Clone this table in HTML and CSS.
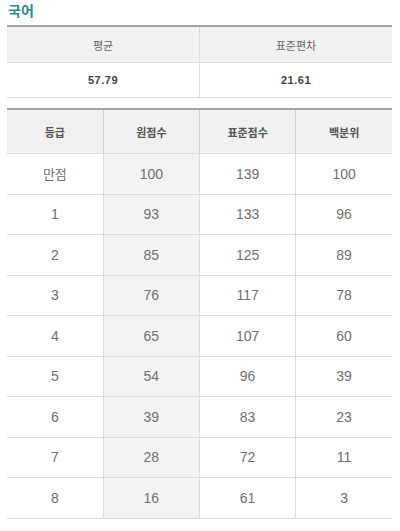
FILE: index.html
```html
<!DOCTYPE html>
<html lang="ko">
<head>
<meta charset="utf-8">
<link rel="stylesheet" href="styles.css">
</head>
<body>
<div class="page">
  <h2 class="title">국어</h2>
  <table class="summary">
    <thead>
      <tr><th>평균</th><th>표준편차</th></tr>
    </thead>
    <tbody>
      <tr><td>57.79</td><td>21.61</td></tr>
    </tbody>
  </table>
  <table class="grades">
    <thead>
      <tr><th>등급</th><th>원점수</th><th>표준점수</th><th>백분위</th></tr>
    </thead>
    <tbody>
      <tr><td class="ko">만점</td><td class="raw">100</td><td>139</td><td>100</td></tr>
      <tr><td>1</td><td class="raw">93</td><td>133</td><td>96</td></tr>
      <tr><td>2</td><td class="raw">85</td><td>125</td><td>89</td></tr>
      <tr><td>3</td><td class="raw">76</td><td>117</td><td>78</td></tr>
      <tr><td>4</td><td class="raw">65</td><td>107</td><td>60</td></tr>
      <tr><td>5</td><td class="raw">54</td><td>96</td><td>39</td></tr>
      <tr><td>6</td><td class="raw">39</td><td>83</td><td>23</td></tr>
      <tr><td>7</td><td class="raw">28</td><td>72</td><td>11</td></tr>
      <tr><td>8</td><td class="raw">16</td><td>61</td><td>3</td></tr>
    </tbody>
  </table>
</div>
</body>
</html>
```
FILE: styles.css
```css
html, body {
  margin: 0;
  padding: 0;
  background: #ffffff;
}
body {
  font-family: "Liberation Sans", "Noto Sans CJK KR", sans-serif;
  color: #555;
}
.page {
  width: 385px;
  padding: 0 0 0 7px;
}
.title {
  margin: 0;
  padding: 2px 0 0 1px;
  height: 25px;
  box-sizing: border-box;
  font-family: "Noto Sans CJK KR", sans-serif;
  font-size: 14px;
  line-height: 16px;
  font-weight: bold;
  color: #2a8f8f;
}
table {
  width: 385px;
  border-collapse: collapse;
  table-layout: fixed;
  border-top: 2px solid #a3a3a3;
}
th, td {
  text-align: center;
  padding: 0;
  border-bottom: 1px solid #dcdcdc;
  border-left: 1px solid #dcdcdc;
}
th:first-child, td:first-child {
  border-left: none;
}
th {
  background: #f1f1f1;
  font-family: "Noto Sans CJK KR", sans-serif;
  font-size: 11px;
  font-weight: normal;
  color: #555;
}
.summary th {
  height: 35px;
  color: #666;
}
.summary td {
  height: 34px;
  font-size: 11px;
  font-weight: bold;
  letter-spacing: 0.5px;
  color: #444;
}
.summary {
  margin-bottom: 10px;
}
.grades th {
  height: 43px;
  font-weight: bold;
  color: #555;
  border-left-color: #cfcfcf;
}
.grades td {
  height: 39.5px;
  font-size: 14px;
  color: #707070;
}
.grades td.ko {
  font-family: "Noto Sans CJK KR", sans-serif;
  font-size: 13px;
}
.grades td.raw {
  background: #f4f2f2;
}
```
